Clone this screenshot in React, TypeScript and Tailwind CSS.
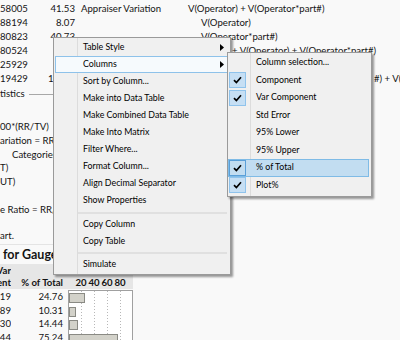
import React from "react";

function Arrow() {
  return (
    <svg width="4" height="7" viewBox="0 0 4 7" className="block">
      <path d="M0 0 L4 3.5 L0 7 Z" fill="#000" />
    </svg>
  );
}

function Check() {
  return (
    <svg width="9" height="8" viewBox="0 0 9 8" className="block">
      <path d="M1 4.2 L3.4 6.6 L8 1.3" fill="none" stroke="#000" strokeWidth="1.7" />
    </svg>
  );
}

type TopRowProps = { a: string; b: string; c: string; d: string; bClass?: string; dClass?: string };

function TopRow({ a, b, c, d, bClass = "text-right", dClass = "" }: TopRowProps) {
  return (
    <div className="flex h-[14px] items-center whitespace-nowrap">
      <div className="w-[24px] shrink-0 text-right">{a}</div>
      <div className={"w-[51px] shrink-0 " + bClass}>{b}</div>
      <div className="w-[6px] shrink-0" />
      <div className="w-[107px] shrink-0">{c}</div>
      <div className={"shrink-0 " + dClass}>{d}</div>
    </div>
  );
}

function Report() {
  const lines = [
    { t: "00*(RR/TV)", c: "" },
    { t: "ariation = RR", c: "" },
    { t: "Categories =", c: "pl-[12px]" },
    { t: "T)", c: "" },
    { t: "UT)", c: "" },
    { t: "", c: "" },
    { t: "e Ratio = RR/", c: "" },
  ];
  const rows = [
    { a: "19", p: "24.76" },
    { a: "89", p: "10.31" },
    { a: "30", p: "14.44" },
    { a: "44", p: "75.24" },
  ];
  return (
    <div className="pt-[2px] text-[9.6px] leading-none text-[#141414]">
      <TopRow a="58005" b="41.53" c="Appraiser Variation" d="V(Operator) + V(Operator*part#)" />
      <TopRow a="88194" b="8.07" c="" d="V(Operator)" dClass="pl-[13px]" />
      <TopRow a="80823" b="40.73" c="" d="V(Operator*part#)" dClass="pl-[13px]" />
      <TopRow a="80524" b="" c="" d="+ V(Operator) + V(Operator*part#)" dClass="pl-[44px]" />
      <TopRow a="25929" b="" c="" d="" />
      <TopRow a="19429" b="1" c="" d="#) + V(" bClass="pl-[24px] text-left" dClass="pl-[186px]" />
      <div className="mt-[1px] flex h-[14px] items-center">
        <span>tistics</span>
        <div className="ml-[4px] h-px w-[60px] bg-[#a8a8a8]" />
      </div>
      <div className="mt-[19px]">
        {lines.map((l, i) => (
          <div key={i} className={"flex h-[13.75px] items-center whitespace-nowrap " + l.c}>
            {l.t}
          </div>
        ))}
      </div>
      <div className="mt-[13px] flex h-[14px] items-center">art.</div>
      <div className="mt-[1px] h-px w-[60px] bg-[#e4e4e4]" />
      <div className="flex h-[19px] items-center whitespace-nowrap pl-[3px] text-[12.5px] font-bold">
        for Gauge
      </div>
      <div className="flex h-[25px] w-[133px] bg-[#e6e6e6] pt-[1px] text-[9.6px] font-bold leading-[12px]">
        <div className="flex w-[11px] shrink-0 flex-col items-end overflow-hidden">
          <span className="whitespace-nowrap">Var</span>
          <span className="whitespace-nowrap">Component</span>
        </div>
        <div className="flex w-[52px] shrink-0 flex-col items-end justify-end">
          <span className="whitespace-nowrap">% of Total</span>
        </div>
        <div className="ml-[5px] flex w-[65px] shrink-0 items-end pl-[6.5px]">
          {["20", "40", "60", "80"].map((n) => (
            <div key={n} className="flex w-[13px] shrink-0 justify-center">
              <span>{n}</span>
            </div>
          ))}
        </div>
      </div>
      <div className="mt-[1px] flex w-[133px]">
        <div className="w-[68px] shrink-0">
          {rows.map((r) => (
            <div key={r.a} className="flex h-[13.5px] items-center">
              <div className="flex w-[11px] shrink-0 justify-end overflow-hidden">{r.a}</div>
              <div className="w-[52px] shrink-0 text-right">{r.p}</div>
            </div>
          ))}
        </div>
        <div className="relative h-[70px] w-[65px] shrink-0 border border-[#a0a0a0] bg-white">
          <svg className="absolute inset-0" width="63" height="68" viewBox="0 0 63 68">
            {[12.5, 25.5, 38.5, 51.5].map((x) => (
              <line key={x} x1={x} y1="0" x2={x} y2="68" stroke="#b8b8b8" strokeWidth="1" strokeDasharray="1 2" />
            ))}
          </svg>
          <div className="relative">
            {rows.map((r) => (
              <div key={r.a} className="flex h-[13.5px] items-center">
                <div
                  className="h-[10px] border border-[#8a8a84] bg-[#d3d2ca]"
                  style={{ width: `${parseFloat(r.p) * 0.655}px` }}
                />
              </div>
            ))}
          </div>
        </div>
      </div>
    </div>
  );
}

type MainItem = { label?: string; sub?: boolean; active?: boolean; sep?: string };

const mainItems: MainItem[] = [
  { label: "Table Style", sub: true },
  { label: "Columns", sub: true, active: true },
  { label: "Sort by Column..." },
  { label: "Make into Data Table" },
  { label: "Make Combined Data Table" },
  { label: "Make Into Matrix" },
  { label: "Filter Where..." },
  { label: "Format Column..." },
  { label: "Align Decimal Separator" },
  { label: "Show Properties" },
  { sep: "h-[7px]" },
  { label: "Copy Column" },
  { label: "Copy Table" },
  { sep: "h-[6px]" },
  { label: "Simulate" },
];

function MainMenu() {
  return (
    <div className="absolute left-[53px] top-[37px] h-[238px] w-[178px] border border-[#9a9a9a] bg-[#f0f0f0] pt-[1px] text-[8.8px] leading-none text-black shadow-[2px_2px_2px_rgba(0,0,0,0.4)]">
      <div className="absolute bottom-0 left-[23px] top-0 w-px bg-[#dcdcdc]" />
      <div className="relative">
        {mainItems.map((it, i) =>
          it.sep ? (
            <div key={i} className={"flex items-center pl-[24px] pr-[3px] " + it.sep}>
              <div className="h-[2px] w-full bg-[#e0e0e0]" />
            </div>
          ) : (
            <div
              key={i}
              className={
                "ml-[1px] mr-[2px] flex h-[17px] items-center border pl-[27px] pr-[3px] whitespace-nowrap " +
                (it.active ? "border-[#8ec2ea] bg-[#f6fafd]" : "border-transparent")
              }
            >
              <span>{it.label}</span>
              {it.sub ? (
                <span className="ml-auto">
                  <Arrow />
                </span>
              ) : null}
            </div>
          )
        )}
      </div>
    </div>
  );
}

type SubItem = { label: string; checked?: boolean; active?: boolean };

const subItems: SubItem[] = [
  { label: "Column selection..." },
  { label: "Component", checked: true },
  { label: "Var Component", checked: true },
  { label: "Std Error" },
  { label: "95% Lower" },
  { label: "95% Upper" },
  { label: "% of Total", checked: true, active: true },
  { label: "Plot%", checked: true },
];

function SubMenu() {
  return (
    <div className="absolute left-[227px] top-[52px] h-[145px] w-[145px] border border-[#9a9a9a] bg-[#f0f0f0] pt-[1px] text-[8.8px] leading-none text-black shadow-[2px_2px_2px_rgba(0,0,0,0.4)]">
      <div className="absolute bottom-0 left-[22px] top-0 w-px bg-[#dcdcdc]" />
      <div className="relative">
        {subItems.map((it) => (
          <div
            key={it.label}
            className={
              "mr-[2px] flex h-[17.5px] items-center border whitespace-nowrap " +
              (it.active ? "border-[#7fbbe6] bg-[#c2ddf1]" : "border-transparent")
            }
          >
            <div
              className={
                "flex h-[16px] w-[17px] shrink-0 items-center justify-center border " +
                (it.checked
                  ? it.active
                    ? "border-[#5a9fd8] bg-[#c2ddf1]"
                    : "border-[#8fc3ec] bg-[#c6dff4]"
                  : "border-transparent")
              }
            >
              {it.checked ? <Check /> : null}
            </div>
            <span className="ml-[10px]">{it.label}</span>
          </div>
        ))}
      </div>
    </div>
  );
}

export default function App() {
  return (
    <div className="relative h-[340px] w-[400px] overflow-hidden bg-[#f9f9f9] font-['Lato',sans-serif]">
      <Report />
      <MainMenu />
      <SubMenu />
    </div>
  );
}
